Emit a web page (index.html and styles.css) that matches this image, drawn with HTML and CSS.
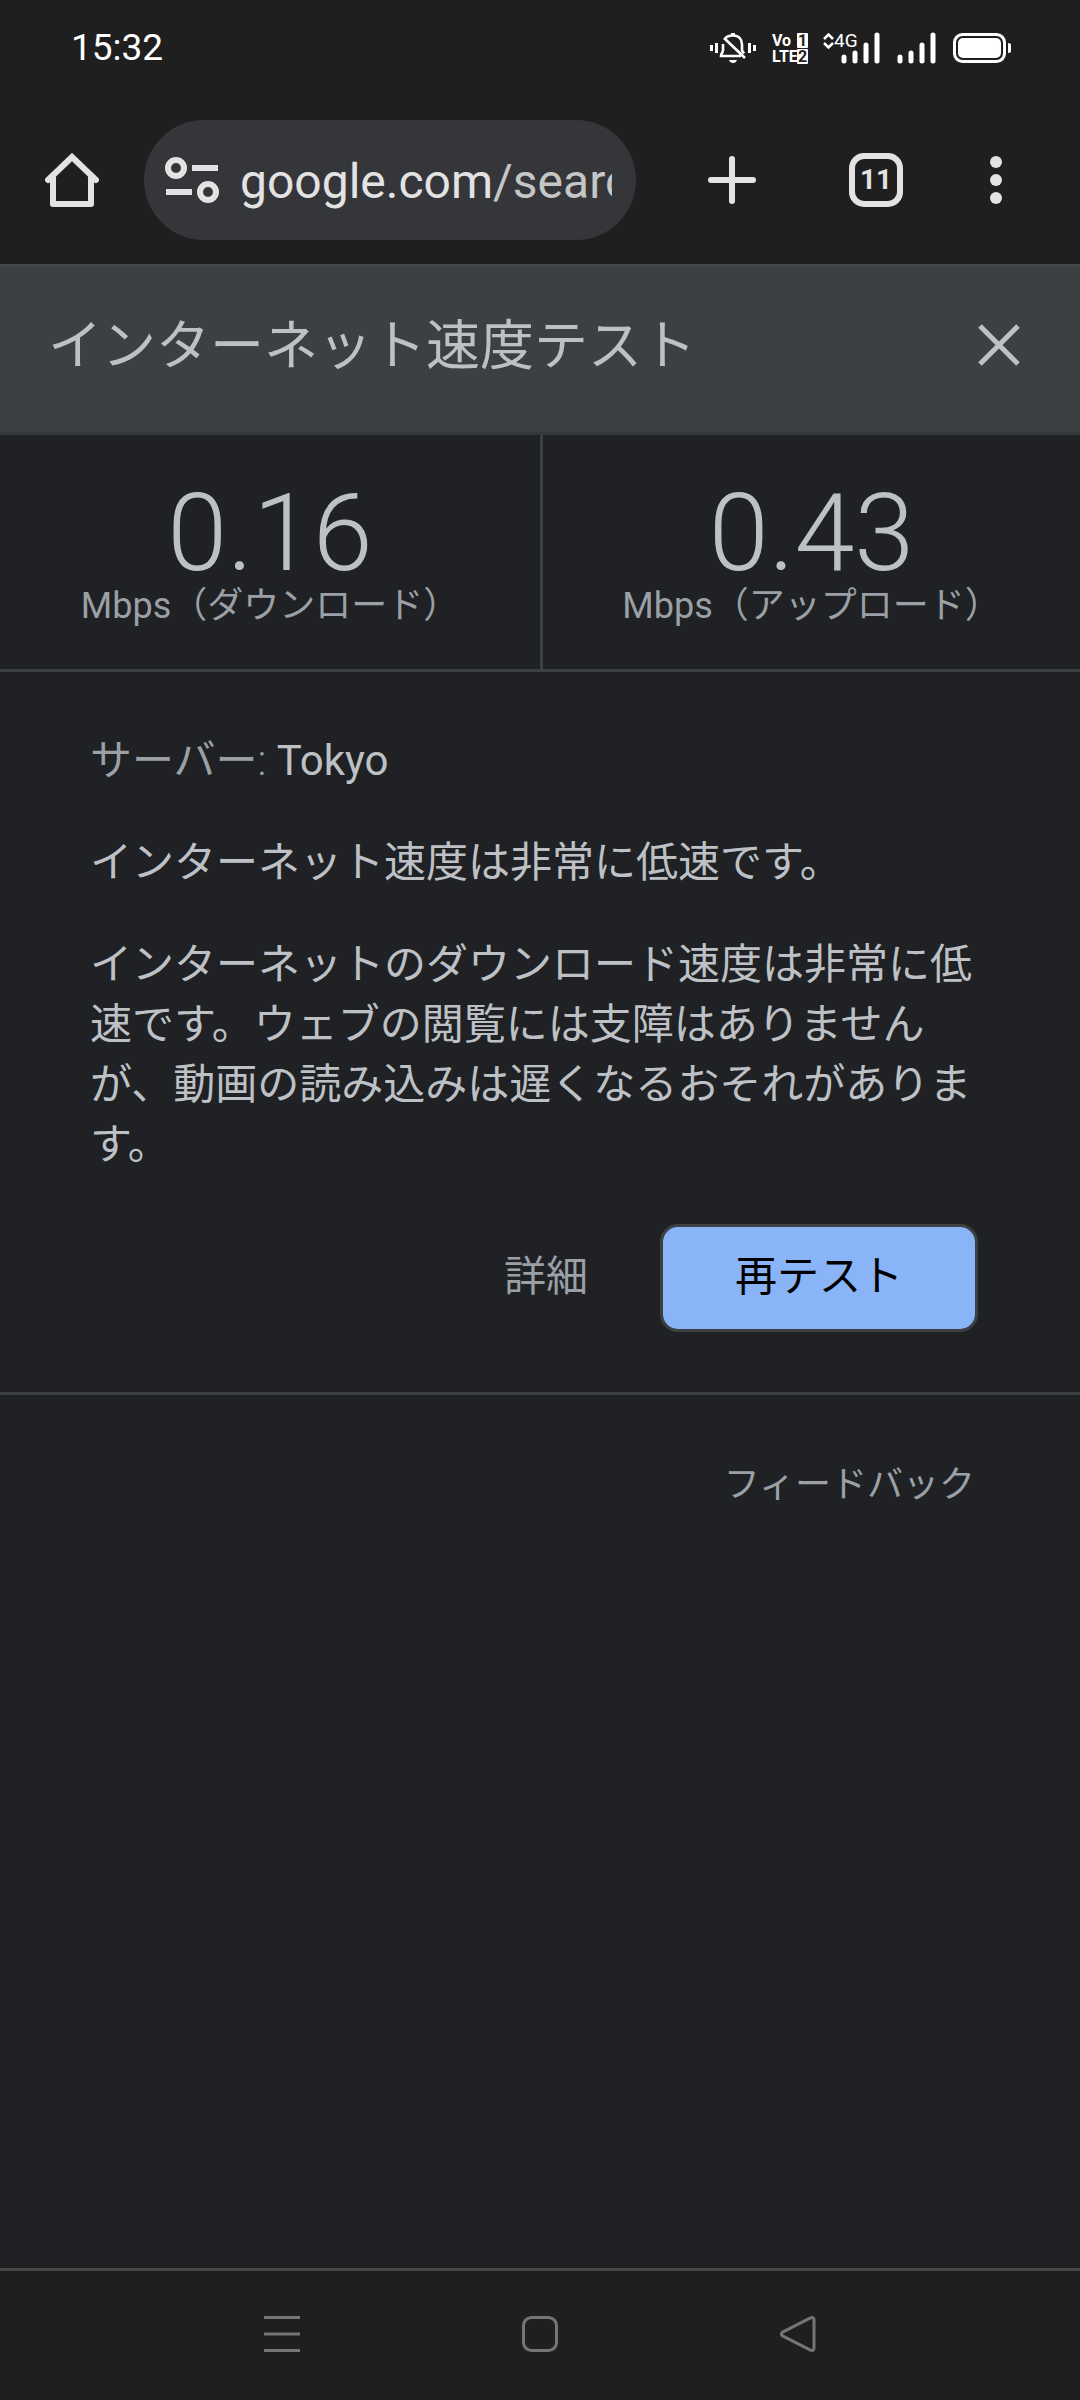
FILE: index.html
```html
<!DOCTYPE html>
<html lang="ja">
<head>
<meta charset="utf-8">
<meta name="viewport" content="width=device-width">
<title>インターネット速度テスト</title>
<link rel="stylesheet" href="styles.css">
</head>
<body>
<div class="status-bar">
  <time class="clock">15:32</time>
  <div class="status-icons">
    <svg class="bell" width="46" height="32" viewBox="0 0 46 32" fill="none" stroke="#fff" stroke-width="3">
      <path d="M1.500 13v6M6.500 11v10M39.500 11v10M44.500 13v6"/>
      <path d="M15 6.500C17 4 20 3.500 23 3.500c6 0 9 4 9 9v6l2 3M13 12v6c0 3-2 3-2 6h20M14 6l21 20" stroke-width="2.600"/>
      <path d="M23 1v3" stroke-width="4"/>
      <path d="M19 28h8q-1 3-4 3t-4-3z" fill="#fff" stroke="none"/>
    </svg>
    <div class="volte">
      <span class="volte-text">Vo</span><span class="volte-sim">1</span>
      <span class="volte-text">LTE</span><span class="volte-sim">2</span>
    </div>
    <div class="mobile">
      <svg width="58" height="32" viewBox="0 0 58 32">
        <path d="M2 7l4.500-4.500L11 7M2 11l4.500 4.500L11 11" fill="none" stroke="#fff" stroke-width="2.500"/>
        <path d="M22 25v4M33 21v8M44 13v16M55 3v26" fill="none" stroke="#fff" stroke-width="5" stroke-linecap="round"/>
      </svg>
      <span class="network">4G</span>
    </div>
    <svg class="signal" width="40" height="32" viewBox="0 0 40 32">
      <path d="M3 25v4M14 21v8M25 13v16M36 3v26" fill="none" stroke="#fff" stroke-width="5" stroke-linecap="round"/>
    </svg>
    <svg class="battery" width="58" height="32" viewBox="0 0 58 32">
      <rect x="1.500" y="2.500" width="50" height="27" rx="8" fill="none" stroke="#fff" stroke-width="3"/>
      <rect x="5" y="6" width="43" height="20" rx="5" fill="#fff"/>
      <path d="M55 11q3 0 3 2v6q0 2-3 2z" fill="#fff"/>
    </svg>
  </div>
</div>

<nav class="toolbar" aria-label="ブラウザ">
  <button class="tool home" aria-label="ホーム">
    <svg width="54" height="54" viewBox="0 0 54 54" fill="none" stroke="#e3e3e3" stroke-width="6" stroke-linecap="round" stroke-linejoin="round">
      <path d="M3 27L27 4l24 23" stroke-linejoin="miter"/><path d="M8 23v28h38V23"/>
    </svg>
  </button>
  <button class="address">
    <svg class="tune" width="54" height="54" viewBox="0 0 54 54" fill="none" stroke="#e3e3e3" stroke-width="6">
      <circle cx="11" cy="15" r="8"/><circle cx="43" cy="39" r="8"/><path d="M27 15h26M1 39h26"/>
    </svg>
    <span class="url">google.com<span class="path">/search</span></span>
  </button>
  <button class="tool new-tab" aria-label="新しいタブ">
    <svg width="48" height="48" viewBox="0 0 48 48" stroke="#e3e3e3" stroke-width="6" stroke-linecap="round"><path d="M24 3v42M3 24h42"/></svg>
  </button>
  <button class="tool tabs"><span class="tab-count">11</span></button>
  <button class="tool menu" aria-label="メニュー">
    <svg width="12" height="48" viewBox="0 0 12 48" fill="#e3e3e3"><circle cx="6" cy="6" r="6"/><circle cx="6" cy="24" r="6"/><circle cx="6" cy="42" r="6"/></svg>
  </button>
</nav>

<main class="page">
  <header class="title-bar">
    <h1 class="title">インターネット速度テスト</h1>
    <button class="close" aria-label="閉じる">
      <svg width="42" height="42" viewBox="0 0 42 42" stroke="#bdc1c6" stroke-width="5"><path d="M2 2l38 38M40 2L2 40"/></svg>
    </button>
  </header>

  <section class="results">
    <div class="result"><span class="speed">0.16</span><span class="unit">Mbps（ダウンロード）</span></div>
    <div class="result"><span class="speed">0.43</span><span class="unit">Mbps（アップロード）</span></div>
  </section>

  <section class="summary">
    <p><span class="server-label">サーバー<span class="colon">: </span></span>Tokyo</p>
    <p>インターネット速度は非常に低速です。</p>
    <p>インターネットのダウンロード速度は非常に低速です。ウェブの閲覧には支障はありませんが、動画の読み込みは遅くなるおそれがあります。</p>
    <div class="actions">
      <button class="details">詳細</button>
      <button class="retest">再テスト</button>
    </div>
  </section>

  <footer class="feedback-row"><a class="feedback" href="#">フィードバック</a></footer>
</main>

<nav class="system-nav" aria-label="システム">
  <button class="system-button" aria-label="最近">
    <svg width="36" height="36" viewBox="0 0 36 36" stroke="#757575" stroke-width="3"><path d="M0 1.500h36M0 18h36M0 34.500h36"/></svg>
  </button>
  <button class="system-button" aria-label="ホーム画面">
    <svg width="36" height="36" viewBox="0 0 36 36" fill="none" stroke="#757575" stroke-width="3"><rect x="1.500" y="1.500" width="33" height="33" rx="8"/></svg>
  </button>
  <button class="system-button" aria-label="戻る">
    <svg width="36" height="36" viewBox="0 0 36 36" fill="none" stroke="#757575" stroke-width="3" stroke-linejoin="round"><path d="M2.500 16.200L30.500 1.900Q34 .8 34 4v28q0 3.200-3.500 2.100L2.500 19.800q-2.500-1.800 0-3.600z"/></svg>
  </button>
</nav>
</body>
</html>
```
FILE: styles.css
```css
* {
  box-sizing: border-box;
}

body {
  margin: 0;
  min-height: 100vh;
  display: flex;
  flex-direction: column;
  background: #202124;
  color: #bdc1c6;
  font-family: Roboto, "Noto Sans CJK JP", sans-serif;
  font-size: 42px;
  line-height: 60px;
}

button {
  margin: 0;
  padding: 0;
  border: 0;
  background: none;
  color: inherit;
  font: inherit;
}

svg {
  display: block;
  flex: none;
}

/* Status bar */
.status-bar {
  height: 96px;
  padding: 0 69px 0 71px;
  display: flex;
  align-items: center;
  justify-content: space-between;
  background: #1f1f1f;
  color: #fff;
}

.clock {
  font-size: 37px;
}

.status-icons {
  display: flex;
  align-items: center;
}

.volte {
  width: 36px;
  margin-left: 16px;
  display: grid;
  grid-template-columns: 25px 11px;
  row-gap: 1px;
  font: bold 16px/15px "Liberation Sans Narrow", Roboto, sans-serif;
}

.volte-text {
  white-space: nowrap;
}

.volte-sim {
  border-radius: 1px;
  background: #fff;
  color: #1f1f1f;
  text-align: center;
}

.mobile {
  position: relative;
  margin-left: 14px;
}

.network {
  position: absolute;
  left: 12px;
  top: 0;
  font-size: 19px;
  line-height: 18px;
}

.signal {
  margin-left: 17px;
}

.battery {
  margin-left: 16px;
}

/* Browser toolbar */
.toolbar {
  height: 171px;
  display: flex;
  align-items: center;
  padding-right: 12px;
  border-bottom: 3px solid #444746;
  background: #1f1f1f;
  color: #e3e3e3;
}

.tool {
  height: 120px;
  display: flex;
  align-items: center;
  justify-content: center;
  flex: none;
}

.home,
.menu {
  width: 144px;
}

.new-tab {
  width: 192px;
}

.tabs {
  width: 96px;
}

.address {
  flex: 1;
  min-width: 0;
  height: 120px;
  padding: 0 24px 0 21px;
  display: flex;
  align-items: center;
  gap: 21px;
  border-radius: 60px;
  background: #35363a;
  text-align: left;
}

.url {
  flex: 1;
  min-width: 0;
  padding-top: 3px;
  overflow: hidden;
  white-space: nowrap;
  font-size: 48px;
}

.path {
  color: #c4c7c5;
}

.tab-count {
  width: 54px;
  height: 54px;
  border: 6px solid #e3e3e3;
  border-radius: 15px;
  font-size: 28px;
  font-weight: 700;
  line-height: 42px;
}

/* Speed test */
.page {
  flex: 1;
}

.title-bar {
  height: 168px;
  padding: 48px 60px 0 48px;
  display: flex;
  align-items: flex-start;
  justify-content: space-between;
  border-bottom: 3px solid #34383b;
  background: #3c4043;
}

.title {
  margin: 0;
  font-size: 54px;
  font-weight: 400;
  line-height: 64px;
}

.close {
  height: 60px;
  display: flex;
  align-items: center;
}

.results {
  display: grid;
  grid-template-columns: 1fr 1fr;
  border-bottom: 3px solid #3c4043;
}

.result {
  padding: 45px 0 43px;
  display: flex;
  flex-direction: column;
  align-items: center;
}

.result + .result {
  border-left: 3px solid #3c4043;
}

.speed {
  font-size: 108px;
  font-weight: 300;
  line-height: 106px;
}

.unit {
  color: #9aa0a6;
  font-size: 36px;
  line-height: 40px;
}

.summary {
  padding: 59px 102px 60px 90px;
  border-bottom: 3px solid #3c4043;
}

.summary p {
  margin: 0 0 42px;
}

.server-label {
  color: #9aa0a6;
}

.colon {
  font-weight: 300;
}

.summary p:last-of-type {
  margin-bottom: 49px;
}

.actions {
  display: flex;
  align-items: center;
  justify-content: flex-end;
  gap: 72px;
}

.details {
  color: #9aa0a6;
}

.retest {
  height: 108px;
  padding: 0 72px;
  border: 3px solid #3c4043;
  border-radius: 18px;
  background: #8ab4f8;
  color: #000;
}

.details,
.retest {
  padding-bottom: 3px;
}

.feedback-row {
  padding: 58px 105px;
  text-align: right;
}

.feedback {
  color: #9aa0a6;
  font-size: 36px;
  text-decoration: none;
}

/* System navigation */
.system-nav {
  height: 132px;
  padding: 0 153px 3px;
  display: grid;
  grid-template-columns: repeat(3, 1fr);
  border-top: 3px solid #444746;
  background: #1f1f1f;
}

.system-button {
  display: flex;
  align-items: center;
  justify-content: center;
}
```
